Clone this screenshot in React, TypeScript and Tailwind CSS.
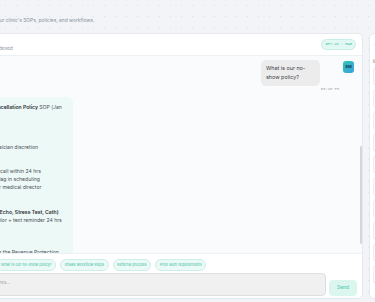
import React from 'react';

// SOP assistant chat — right-hand part of the workspace view

type Line = { text?: React.ReactNode };

const answer: Line[] = [
  { text: <>Based on the <b className="font-semibold text-[#2b2f33]">No-Show &amp; Cancellation Policy</b> SOP (Jan</> },
  { text: '2024):' },
  {},
  { text: <b className="font-semibold text-[#2b2f33]">Standard Visits</b> },
  { text: '• Cancel 24 hrs ahead' },
  { text: '• $50 fee on 2nd miss at physician discretion' },
  {},
  { text: <b className="font-semibold text-[#2b2f33]">Follow-up Steps</b> },
  { text: '• 1st no-show: staff courtesy call within 24 hrs' },
  { text: '• 2nd miss: warning letter + flag in scheduling' },
  { text: '• 3rd no-show: file review per medical director' },
  {},
  { text: <b className="font-semibold text-[#2b2f33]">Procedures</b> },
  { text: <>• <b className="font-semibold text-[#2b2f33]">High-revenue procedures (Echo, Stress Test, Cath)</b></> },
  { text: '• Confirmation call by counselor + text reminder 24 hrs' },
  { text: 'prior' },
  {},
  { text: <b className="font-semibold text-[#2b2f33]">Tracking</b> },
  { text: '• Repeat offenders are kept in the Revenue Protection' },
  { text: 'report.' },
];

const suggestions = [
  'Late fee schedules',
  'HIPAA releases',
  'What is our no-show policy?',
  'Intake workflow steps',
  'Referral process',
  'Prior auth requirements',
];

export default function App() {
  return (
    <div className="h-[302px] w-[375px] overflow-hidden bg-[#f2f4f7] bg-[radial-gradient(circle,#dce1e8_0.6px,transparent_0.8px)] bg-size-[11px_11px] font-['Inter',sans-serif]">
      <div className="-ml-[100px] w-[730px]">
        {/* page intro */}
        <div className="h-[33px] pl-[36px] pt-[17px] text-[4.9px] leading-[6px] text-[#8b929c] whitespace-nowrap">
          Ask any questions about your clinic's SOPs, policies, and workflows.
        </div>

        <div className="flex h-[267px] gap-[6px]">
          {/* chat card */}
          <section className="flex h-[266px] w-[463px] flex-col overflow-hidden rounded-[5px] border border-[#e6e9ed] bg-white">
            <header className="flex h-[22px] shrink-0 items-center justify-between border-b border-[#edf0f3] px-[6px]">
              <div className="flex items-center gap-[1px] whitespace-nowrap">
                <div className="h-[12px] w-[12px] rounded-[4px] bg-[#e1f8f3]" />
                <div className="flex flex-col gap-[1px]">
                  <span className="text-[5.6px] font-semibold leading-[6px] text-[#2b2f33]">SOP Assistant</span>
                  <span className="text-[4.8px] leading-[6px] text-[#8b929c]">24 SOP documents · 318 chunks indexed</span>
                </div>
              </div>
              <span className="rounded-full border border-[#c6efe5] bg-[#e1f8f3] px-[3px] py-[2px] font-['Liberation_Mono',monospace] text-[3.7px] leading-[5px] text-[#44c3a8]">
                GPT-4o · RAG
              </span>
            </header>

            <div className="relative flex-1 overflow-hidden bg-[#fafbfd] px-[8px] pt-[4px]">
              {/* user question */}
              <div className="flex justify-end gap-[4px]">
                <div className="flex flex-col items-end">
                  <div className="mr-[19px] w-[59px] rounded-[5px] bg-[#ececec] pl-[5px] pr-[7px] py-[4px] text-[5.4px] leading-[9px] text-[#3d4247]">
                    What is our no-show policy?
                  </div>
                  <span className="mt-[0.5px] font-['Liberation_Mono',monospace] text-[3.8px] leading-[5px] text-[#9aa0a6]">03:45 PM</span>
                </div>
                <div className="mt-[1px] flex h-[12px] w-[11px] items-center justify-center rounded-[3px] bg-linear-to-br from-[#2ec6b2] to-[#3c9ee2] text-[4px] font-bold text-[#17384a]">
                  SM
                </div>
              </div>

              {/* assistant answer */}
              <div className="mt-[5.5px] flex gap-[4px]">
                <div className="mt-[1px] flex h-[12px] w-[11px] shrink-0 items-center justify-center rounded-[3px] bg-[#dff6f1] text-[3.6px] font-bold text-[#2fb79c]">
                  AI
                </div>
                <div className="w-[149px] rounded-[6px] bg-[#edf9f7] pl-[5px] pr-[7px] pt-[6px] pb-[10px] text-[5.1px] leading-[8.05px] text-[#4a4f55]">
                  {answer.map((line, i) => (
                    <div key={i} className="h-[8.05px] whitespace-nowrap">
                      {line.text}
                    </div>
                  ))}
                </div>
              </div>

              {/* scroll thumb */}
              <div className="absolute right-[0px] top-[90px] h-[98px] w-[2px] rounded-full bg-[#d3d6da]" />
            </div>

            <footer className="shrink-0 border-t border-[#eef0f3] bg-white pl-[8px] pr-[5px] pb-[2.5px] pt-[5.5px]">
              <div className="flex gap-[4px] whitespace-nowrap">
                {suggestions.map((s) => (
                  <span
                    key={s}
                    className="rounded-full border border-[#cdeee7] bg-[#ecfaf7] px-[3.5px] py-[2.5px] text-[3.8px] leading-[4.5px] text-[#3cbf9f]"
                  >
                    {s}
                  </span>
                ))}
              </div>
              <div className="mt-[2px] flex items-end gap-[3px]">
                <div className="flex h-[23px] flex-1 rounded-[4px] border border-[#dcdfe2] bg-[#f0f0f0] px-[9px] pt-[6px] text-[4.6px] leading-[6px] text-[#9a9fa5] whitespace-nowrap">
                  Ask about SOPs, policies, or procedures...
                </div>
                <button className="h-[16px] w-[28px] rounded-[4px] bg-[#dbf6ef] text-[4.8px] font-medium text-[#59cbb2]">
                  Send
                </button>
              </div>
            </footer>
          </section>

          {/* sources panel */}
          <aside className="flex h-[266px] w-[200px] flex-col rounded-[5px] border border-[#e6e9ed] bg-white px-[3px]">
            <div className="h-[11px] border-b border-[#eef0f3]" />
            <div className="mt-[14px] text-[4.4px] font-semibold leading-[6px] text-[#8b929c]">Indexed documents</div>
            <div className="mt-[2px] flex flex-col gap-[3px]">
              {Array.from({ length: 10 }).map((_, i) => (
                <div key={i} className="h-[19px] rounded-[3px] border border-[#eceef1] bg-[#fbfbfc]" />
              ))}
            </div>
          </aside>
        </div>
      </div>
    </div>
  );
}
